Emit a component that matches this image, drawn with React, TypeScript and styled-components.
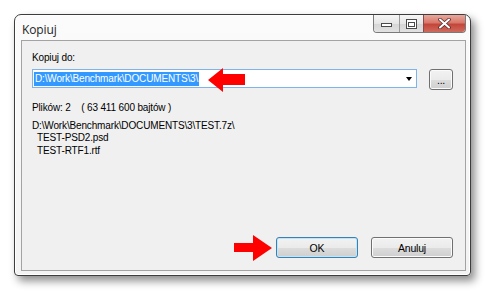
import React from "react";
import styled, { createGlobalStyle } from "styled-components";

const Global = createGlobalStyle`
  html, body { margin: 0; padding: 0; background: #ffffff; }
  body { font-family: "Liberation Sans", Arial, sans-serif; }
`;

const Page = styled.div`
  width: 490px;
  height: 298px;
  padding: 14px 0 0 14px;
  box-sizing: border-box;
  background: #fff;
`;

const Window = styled.div`
  width: 457px;
  height: 262px;
  box-sizing: border-box;
  border: 1px solid #3d3d3d;
  border-radius: 7px 7px 4px 4px;
  background: linear-gradient(#fbfbfb, #f3f3f3);
  box-shadow: 4px 5px 9px rgba(0, 0, 0, 0.45), inset 0 0 0 1px #ffffff;
  display: flex;
  flex-direction: column;
  padding: 0 4px 4px 6px;
  position: relative;
`;

const TitleBar = styled.div`
  height: 25px;
  display: flex;
  align-items: flex-start;
  justify-content: space-between;
`;

const Title = styled.div`
  font-family: "Open Sans", "Noto Sans", sans-serif;
  font-size: 12px;
  color: #1e1e1e;
  padding-top: 6px;
  padding-left: 1px;
  letter-spacing: -0.1px;
`;

const Caption = styled.div`
  display: flex;
  height: 17px;
  border: 1px solid #7a7a7a;
  border-top: none;
  border-radius: 0 0 4px 4px;
  overflow: hidden;
`;

const CapBtn = styled.div<{ $w: number; $close?: boolean }>`
  width: ${(p) => p.$w}px;
  height: 17px;
  display: flex;
  align-items: center;
  justify-content: center;
  box-sizing: border-box;
  border-left: ${(p) => (p.$close ? "1px solid #8a4a4a" : "1px solid #9a9a9a")};
  &:first-child { border-left: none; }
  background: ${(p) =>
    p.$close
      ? "linear-gradient(#e8a89d 0%, #d8786a 45%, #c4463a 55%, #cf6a5c 100%)"
      : "linear-gradient(#f6f6f6 0%, #e6e6e6 50%, #d5d5d5 51%, #e2e2e2 100%)"};
`;

const Client = styled.div`
  flex: 1;
  border: 1px solid #a3a3a3;
  background: #f0f0f0;
  display: flex;
  flex-direction: column;
  padding: 10px 12px 12px 10px;
  position: relative;
  font-size: 10px;
  letter-spacing: -0.15px;
  color: #000;
`;

const Label = styled.div`
  line-height: 13px;
  height: 13px;
`;

const ComboRow = styled.div`
  display: flex;
  gap: 12px;
  margin-top: 5px;
  align-items: flex-start;
`;

const Combo = styled.div`
  flex: 1;
  height: 19px;
  box-sizing: border-box;
  border: 1px solid #7eb4ea;
  background: #fff;
  display: flex;
  align-items: center;
  padding: 0 4px 0 1px;
`;

const Selected = styled.span`
  background: #3399ff;
  color: #fff;
  line-height: 14px;
  padding: 0 1px;
`;

const Spacer = styled.div`
  flex: 1;
`;

const DropArrow = styled.div`
  width: 0;
  height: 0;
  border-left: 3.5px solid transparent;
  border-right: 3.5px solid transparent;
  border-top: 4px solid #000;
  margin-top: 1px;
`;

const Button = styled.div<{ $w: number; $default?: boolean }>`
  width: ${(p) => p.$w}px;
  height: 21px;
  box-sizing: border-box;
  border: 1px solid ${(p) => (p.$default ? "#3c7fb1" : "#707070")};
  border-radius: 3px;
  background: linear-gradient(#f2f2f2 0%, #ebebeb 50%, #dddddd 51%, #cfcfcf 100%);
  box-shadow: inset 0 0 0 1px ${(p) => (p.$default ? "#bfe6f8" : "#fbfbfb")};
  display: flex;
  align-items: center;
  justify-content: center;
  color: #000;
  font-size: 10.5px;
  letter-spacing: -0.2px;
`;

const Info = styled.div`
  margin-top: 11px;
  line-height: 13px;
  white-space: pre;
`;

const PathBlock = styled.div`
  margin-top: 6px;
  line-height: 12.3px;
  white-space: pre;
`;

const Buttons = styled.div`
  margin-top: auto;
  display: flex;
  justify-content: flex-end;
  gap: 13px;
`;

const Arrow = styled.svg<{ $x: number; $y: number }>`
  position: absolute;
  left: ${(p) => p.$x}px;
  top: ${(p) => p.$y}px;
`;

export default function App() {
  return (
    <>
      <Global />
      <Page>
        <Window>
          <TitleBar>
            <Title>Kopiuj</Title>
            <Caption>
              <CapBtn $w={25}>
                <svg width="13" height="8" viewBox="0 0 13 8">
                  <rect x="1.5" y="3.5" width="10" height="3" fill="#fff" stroke="#4a4a4a" />
                </svg>
              </CapBtn>
              <CapBtn $w={24}>
                <svg width="11" height="10" viewBox="0 0 11 10">
                  <rect x="0.5" y="0.5" width="10" height="9" fill="#fff" stroke="#4a4a4a" />
                  <rect x="2.5" y="3.5" width="6" height="4" fill="#fff" stroke="#4a4a4a" />
                </svg>
              </CapBtn>
              <CapBtn $w={42} $close>
                <svg width="13" height="11" viewBox="0 0 13 11">
                  <path d="M2 1.5 L11 9.5 M11 1.5 L2 9.5" stroke="#5a2a2a" strokeWidth="3.6" strokeLinecap="round" />
                  <path d="M2 1.5 L11 9.5 M11 1.5 L2 9.5" stroke="#ffffff" strokeWidth="2" strokeLinecap="round" />
                </svg>
              </CapBtn>
            </Caption>
          </TitleBar>
          <Client>
            <Label>Kopiuj do:</Label>
            <ComboRow>
              <Combo>
                <Selected>D:\Work\Benchmark\DOCUMENTS\3\</Selected>
                <Spacer />
                <DropArrow />
              </Combo>
              <Button $w={24}>...</Button>
            </ComboRow>
            <Info>{"Plików: 2    ( 63 411 600 bajtów )"}</Info>
            <PathBlock>
              {"D:\\Work\\Benchmark\\DOCUMENTS\\3\\TEST.7z\\\n  TEST-PSD2.psd\n  TEST-RTF1.rtf"}
            </PathBlock>
            <Buttons>
              <Button $w={82} $default>OK</Button>
              <Button $w={82}>Anuluj</Button>
            </Buttons>
            <Arrow $x={186} $y={27} width="37" height="24" viewBox="0 0 37 24">
              <polygon points="0,12 15,0 15,6 37,6 37,17 15,17 15,24" fill="#ff0000" />
            </Arrow>
            <Arrow $x={212} $y={194} width="38" height="26" viewBox="0 0 38 26">
              <polygon points="0,8 19,8 19,0 38,13 19,26 19,17 0,17" fill="#ff0000" />
            </Arrow>
          </Client>
        </Window>
      </Page>
    </>
  );
}
